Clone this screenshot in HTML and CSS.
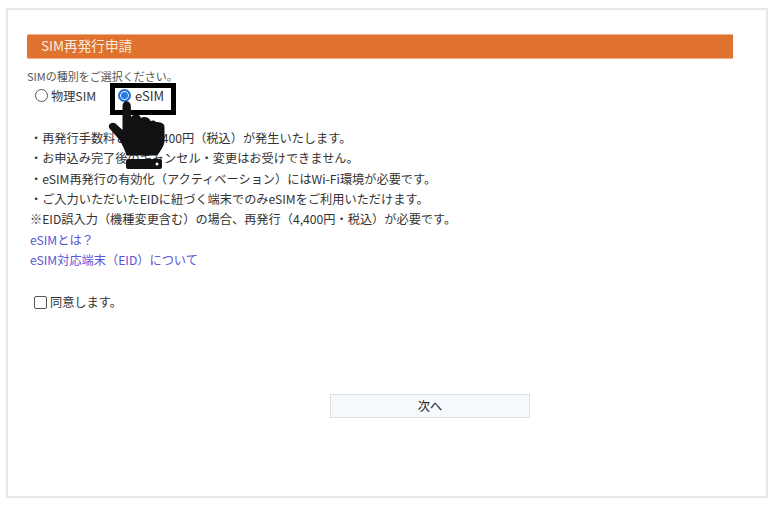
FILE: index.html
```html
<!DOCTYPE html>
<html lang="ja">
<head>
<meta charset="utf-8">
<title>SIM再発行申請</title>
<link rel="stylesheet" href="styles.css">
</head>
<body>
<main class="frame">
  <h1 class="title">SIM再発行申請</h1>
  <p class="lead">SIMの種別をご選択ください。</p>
  <div class="radios">
    <label class="opt"><span class="radio"></span>物理SIM</label>
    <label class="opt opt-e"><span class="radio on"></span><span class="esim">eSIM</span></label>
    <div class="hilite"></div>
    <svg class="hand" viewBox="105 95 65 75" width="65" height="75" aria-hidden="true">
      <path fill="#111" d="M122.5 104 C122.5 97.5 130.8 97.5 130.8 104 L131 115 C133 111.5 140 111.5 141 116 C143.5 114 149.5 115 150.5 119 C153 118 155 118.5 156 120 C159 120 164.5 120.5 164.5 125 L164.5 139 C164 145 160 149 157.5 153.5 L126.5 153.5 C125 148 121 139 117 135 L110 127 C106.5 123 112 118.5 116 122 L122.5 128 Z"/>
      <path fill="#111" d="M128 157 H160 Q162 157 162 159 V165 Q162 167 160 167 H128 Q126 167 126 165 V159 Q126 157 128 157 Z"/>
      <circle cx="157" cy="162" r="1.5" fill="#fff"/>
    </svg>
  </div>
  <ul class="notes">
    <li>・再発行手数料として4,400円（税込）が発生いたします。</li>
    <li>・お申込み完了後のキャンセル・変更はお受けできません。</li>
    <li>・eSIM再発行の有効化（アクティベーション）にはWi-Fi環境が必要です。</li>
    <li>・ご入力いただいたEIDに紐づく端末でのみeSIMをご利用いただけます。</li>
    <li>※EID誤入力（機種変更含む）の場合、再発行（4,400円・税込）が必要です。</li>
    <li><a href="#">eSIMとは？</a></li>
    <li><a href="#">eSIM対応端末（EID）について</a></li>
  </ul>
  <label class="agree"><span class="check"></span>同意します。</label>
  <div class="actions"><button class="next" type="button">次へ</button></div>
</main>
</body>
</html>
```
FILE: styles.css
```css
* { box-sizing: border-box; }
html, body { margin: 0; padding: 0; background: #fff; }
body {
  width: 778px;
  height: 506px;
  overflow: hidden;
  font-family: "Noto Sans CJK JP", "Noto Sans", sans-serif;
  font-size: 12.2px;
  color: #333;
}
.frame {
  width: 762px;
  height: 490px;
  margin: 8px 0 0 6px;
  padding: 24px 33px 0 19px;
  border: 2px solid #e6e6ec;
  background: #fff;
}
.title {
  margin: 0;
  height: 25px;
  padding-left: 14px;
  background: #de722e;
  border-top: 1px solid #f0b080;
  border-bottom: 1px solid #f0b080;
  border-radius: 2px 0 0 2px;
  color: #fbeadf;
  font-size: 13.6px;
  font-weight: 400;
  line-height: 20px;
}
.lead {
  margin: 9px 0 0;
  font-size: 11px;
  line-height: 16px;
  color: #555;
}
.radios {
  position: relative;
  display: flex;
  align-items: center;
  height: 23px;
  padding-left: 8px;
}
.opt { display: flex; align-items: center; gap: 3px; }
.opt-e { margin-left: 22px; }
.esim { margin-left: 1px; font-size: 13px; }
.radio {
  width: 13px;
  height: 13px;
  border: 1px solid #555;
  border-radius: 50%;
  background: #fff;
}
.radio.on {
  border: 2px solid #1f6fd6;
  background: #2a7be0;
  box-shadow: inset 0 0 0 1px #fff;
}
.hilite {
  position: absolute;
  left: 83px;
  top: -1px;
  width: 66px;
  height: 32px;
  border: 5px solid #000;
}
.hand {
  position: absolute;
  left: 78px;
  top: 13px;
}
.notes {
  list-style: none;
  margin: 21px 0 0;
  padding: 0 0 0 3px;
  line-height: 20.35px;
}
.notes a { color: #5a55d8; text-decoration: none; }
.agree {
  display: flex;
  align-items: center;
  gap: 3px;
  margin: 22px 0 0 7px;
  height: 20px;
}
.check {
  width: 13px;
  height: 13px;
  border: 1px solid #555;
  border-radius: 2px;
  background: #fff;
}
.actions {
  display: flex;
  justify-content: center;
  margin-top: 82px;
  padding-left: 100px;
}
.next {
  width: 200px;
  height: 24px;
  padding: 0;
  border: 1px solid #dfdfe3;
  background: #f6f9fe;
  color: #222;
  font-family: inherit;
  font-size: 12.2px;
}
```
